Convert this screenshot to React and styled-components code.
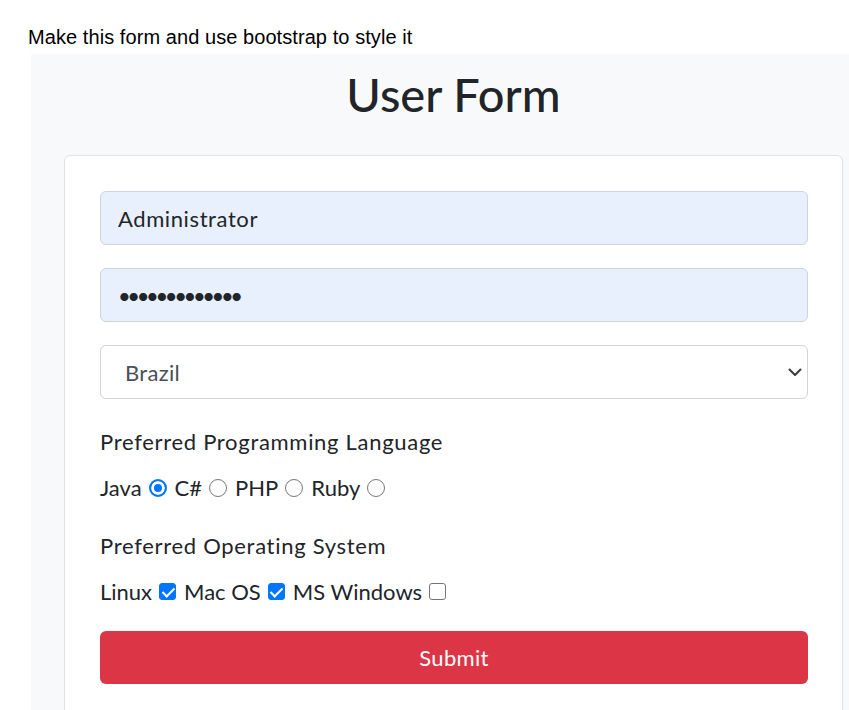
import React from "react";
import styled, { createGlobalStyle } from "styled-components";

const GlobalStyle = createGlobalStyle`
  html, body {
    margin: 0;
    padding: 0;
    background: #ffffff;
    overflow: hidden;
  }
  * { box-sizing: border-box; }
`;

const Page = styled.div`
  padding: 26px 0 0 28px;
`;

const Caption = styled.div`
  font-family: "Liberation Sans", Arial, sans-serif;
  font-size: 20px;
  line-height: 23px;
  letter-spacing: 0.07px;
  color: #000;
`;

const Panel = styled.div`
  margin: 5px 0 0 3px;
  background: #f8f9fa;
  padding: 12px 6px 0 33px;
`;

const Title = styled.h1`
  margin: 0 0 33px;
  font-family: Lato, "Open Sans", sans-serif;
  font-weight: 500;
  font-size: 47px;
  line-height: 56px;
  color: #212529;
  text-align: center;
`;

const Card = styled.form`
  display: flex;
  flex-direction: column;
  background: #ffffff;
  border: 1px solid #dfe2e5;
  border-radius: 6px;
  padding: 35px 34px 35px 35px;
  font-family: Lato, "Open Sans", sans-serif;
  font-size: 22px;
  color: #212529;
`;

const TextInput = styled.input`
  display: block;
  width: 100%;
  height: 54px;
  margin: ${(p) => p.$mt || 0}px 0 0;
  padding: 0 17px;
  border: 1px solid #ced4da;
  border-radius: 6px;
  background: ${(p) => p.$bg || "#ffffff"};
  font-family: Lato, "Open Sans", sans-serif;
  font-size: 22px;
  line-height: 33px;
  color: #212529;
  letter-spacing: ${(p) => p.$spacing || "0.6px"};
  outline: none;
`;

const SelectWrap = styled.div`
  position: relative;
  margin-top: 23px;
`;

const Select = styled.select`
  display: block;
  width: 100%;
  height: 54px;
  padding: 0 40px 0 24px;
  border: 1px solid #ced4da;
  border-radius: 6px;
  background: #ffffff;
  appearance: none;
  -webkit-appearance: none;
  font-family: Lato, "Open Sans", sans-serif;
  font-size: 22px;
  line-height: 33px;
  letter-spacing: 0.3px;
  color: #495057;
  outline: none;
`;

const Chevron = styled.svg`
  position: absolute;
  right: 6px;
  top: 23px;
  width: 14px;
  height: 9px;
  pointer-events: none;
`;

const GroupLabel = styled.div`
  margin-top: ${(p) => p.$mt}px;
  line-height: 33px;
  letter-spacing: 0.7px;
`;

const OptionRow = styled.div`
  display: flex;
  align-items: center;
  gap: 7px;
  margin-top: ${(p) => p.$mt}px;
  height: 33px;
  line-height: 33px;
`;

const OptionText = styled.span`
  white-space: nowrap;
`;

const Radio = styled.input.attrs({ type: "radio" })`
  appearance: none;
  -webkit-appearance: none;
  margin: 0 1px 0 0;
  width: 18px;
  height: 18px;
  border-radius: 50%;
  border: 1.5px solid #767676;
  background: #ffffff;
  flex: none;

  &:checked {
    border: 2px solid #0075ff;
    background: #0075ff;
    box-shadow: inset 0 0 0 3px #ffffff;
  }
`;

const Checkbox = styled.input.attrs({ type: "checkbox" })`
  appearance: none;
  -webkit-appearance: none;
  position: relative;
  margin: 0 1px 0 0;
  width: 17px;
  height: 17px;
  border-radius: 3px;
  border: 1.5px solid #767676;
  background: #ffffff;
  flex: none;

  &:checked {
    border-color: #0075ff;
    background: #0075ff;
  }

  &:checked::after {
    content: "";
    position: absolute;
    left: 4.5px;
    top: 1px;
    width: 5px;
    height: 10px;
    border: solid #ffffff;
    border-width: 0 2.5px 2.5px 0;
    transform: rotate(45deg);
  }
`;

const SubmitButton = styled.button`
  margin-top: 23px;
  height: 53px;
  width: 100%;
  border: none;
  border-radius: 6px;
  background: #dc3545;
  color: #ffffff;
  font-family: Lato, "Open Sans", sans-serif;
  font-size: 22px;
  line-height: 33px;
  letter-spacing: 0.3px;
  cursor: pointer;
`;

const languages = ["Java", "C#", "PHP", "Ruby"];
const systems = [
  { name: "Linux", checked: true },
  { name: "Mac OS", checked: true },
  { name: "MS Windows", checked: false },
];

export default function App() {
  return (
    <>
      <GlobalStyle />
      <Page>
        <Caption>Make this form and use bootstrap to style it</Caption>
        <Panel>
          <Title>User Form</Title>
          <Card onSubmit={(e) => e.preventDefault()}>
            <TextInput type="text" defaultValue="Administrator" $bg="#e8f0fe" />
            <TextInput
              type="password"
              defaultValue="administrator"
              $bg="#e8f0fe"
              $mt={23}
              $spacing="-3.4px"
            />
            <SelectWrap>
              <Select defaultValue="Brazil">
                <option>Brazil</option>
                <option>Argentina</option>
                <option>Chile</option>
              </Select>
              <Chevron viewBox="0 0 14 9">
                <path
                  d="M1.5 1.5 L7 7 L12.5 1.5"
                  fill="none"
                  stroke="#3b3b3b"
                  strokeWidth="2"
                  strokeLinecap="round"
                  strokeLinejoin="round"
                />
              </Chevron>
            </SelectWrap>
            <GroupLabel $mt={26}>Preferred Programming Language</GroupLabel>
            <OptionRow $mt={13}>
              {languages.map((l, i) => (
                <React.Fragment key={l}>
                  <OptionText>{l}</OptionText>
                  <Radio name="language" value={l} defaultChecked={i === 0} />
                </React.Fragment>
              ))}
            </OptionRow>
            <GroupLabel $mt={25}>Preferred Operating System</GroupLabel>
            <OptionRow $mt={13}>
              {systems.map((s) => (
                <React.Fragment key={s.name}>
                  <OptionText>{s.name}</OptionText>
                  <Checkbox name="os" value={s.name} defaultChecked={s.checked} />
                </React.Fragment>
              ))}
            </OptionRow>
            <SubmitButton type="submit">Submit</SubmitButton>
          </Card>
        </Panel>
      </Page>
    </>
  );
}
